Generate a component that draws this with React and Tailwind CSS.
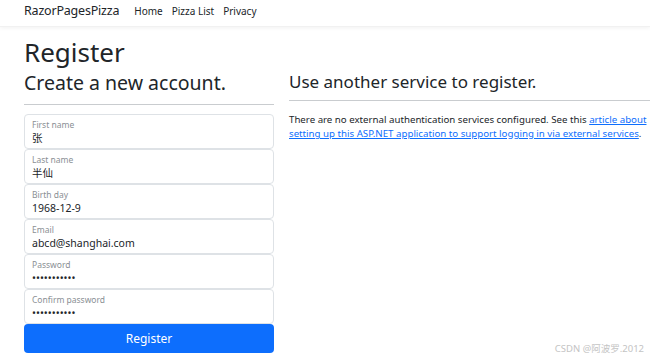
import React from "react";

const fields = [
  ["First name", "张"],
  ["Last name", "半仙"],
  ["Birth day", "1968-12-9"],
  ["Email", "abcd@shanghai.com"],
  ["Password", "•••••••••••"],
  ["Confirm password", "•••••••••••"],
];

const App = () => {
  return (
    <div
      className="min-h-[360px] w-[650px] bg-white text-[#212529] overflow-hidden relative"
      style={{ fontFamily: '"Noto Sans", "Noto Sans CJK SC", sans-serif' }}
    >
      {/* Navbar */}
      <nav className="h-[27px] flex items-center px-6 pb-[4px] shadow-[0_1px_4px_rgba(0,0,0,0.06)] border-b border-[#f1f1f1]">
        <span className="text-[12.5px] tracking-[-0.2px] mr-[15px]">RazorPagesPizza</span>
        <div className="flex gap-[9px] text-[10px]">
          <span>Home</span>
          <span>Pizza List</span>
          <span>Privacy</span>
        </div>
      </nav>

      <div className="px-6 pt-[9px] flex gap-[15px]">
        {/* Left column */}
        <div className="w-[250px] shrink-0">
          <h1 className="text-[26px] leading-[32px]">Register</h1>
          <h2 className="text-[19.5px] leading-[26px] mt-[2px]">Create a new account.</h2>
          <hr className="mt-[8px] border-[#c9cccf]" />
          <div className="mt-[9px] flex flex-col">
            {fields.map(([label, value]) => (
              <div
                key={label}
                className="h-[35px] border border-[#dee2e6] rounded-[4px] px-[7px] pt-[4px] flex flex-col"
              >
                <span className="text-[8.5px] leading-[12px] text-[#8a8f94]">{label}</span>
                <span className="text-[10.5px] leading-[15px]">{value}</span>
              </div>
            ))}
            <button className="h-[29px] bg-[#0d6efd] text-white text-[12px] rounded-[4px]">
              Register
            </button>
          </div>
        </div>

        {/* Right column */}
        <div className="flex-1 pt-[34px]">
          <h3 className="text-[17px] leading-[24px]">Use another service to register.</h3>
          <hr className="mt-[6px] border-[#c9cccf] -mr-6" />
          <p className="mt-[12px] text-[9.7px] leading-[14px] -mr-6">
            There are no external authentication services configured. See this{" "}
            <a className="text-[#0d6efd] underline">
              article about setting up this ASP.NET application to support logging in via external services
            </a>
            .
          </p>
        </div>
      </div>

      <div className="absolute right-[6px] bottom-[4px] text-[9.5px] text-[#c4c4c4]">
        CSDN @阿波罗.2012
      </div>
    </div>
  );
};

export default App;
